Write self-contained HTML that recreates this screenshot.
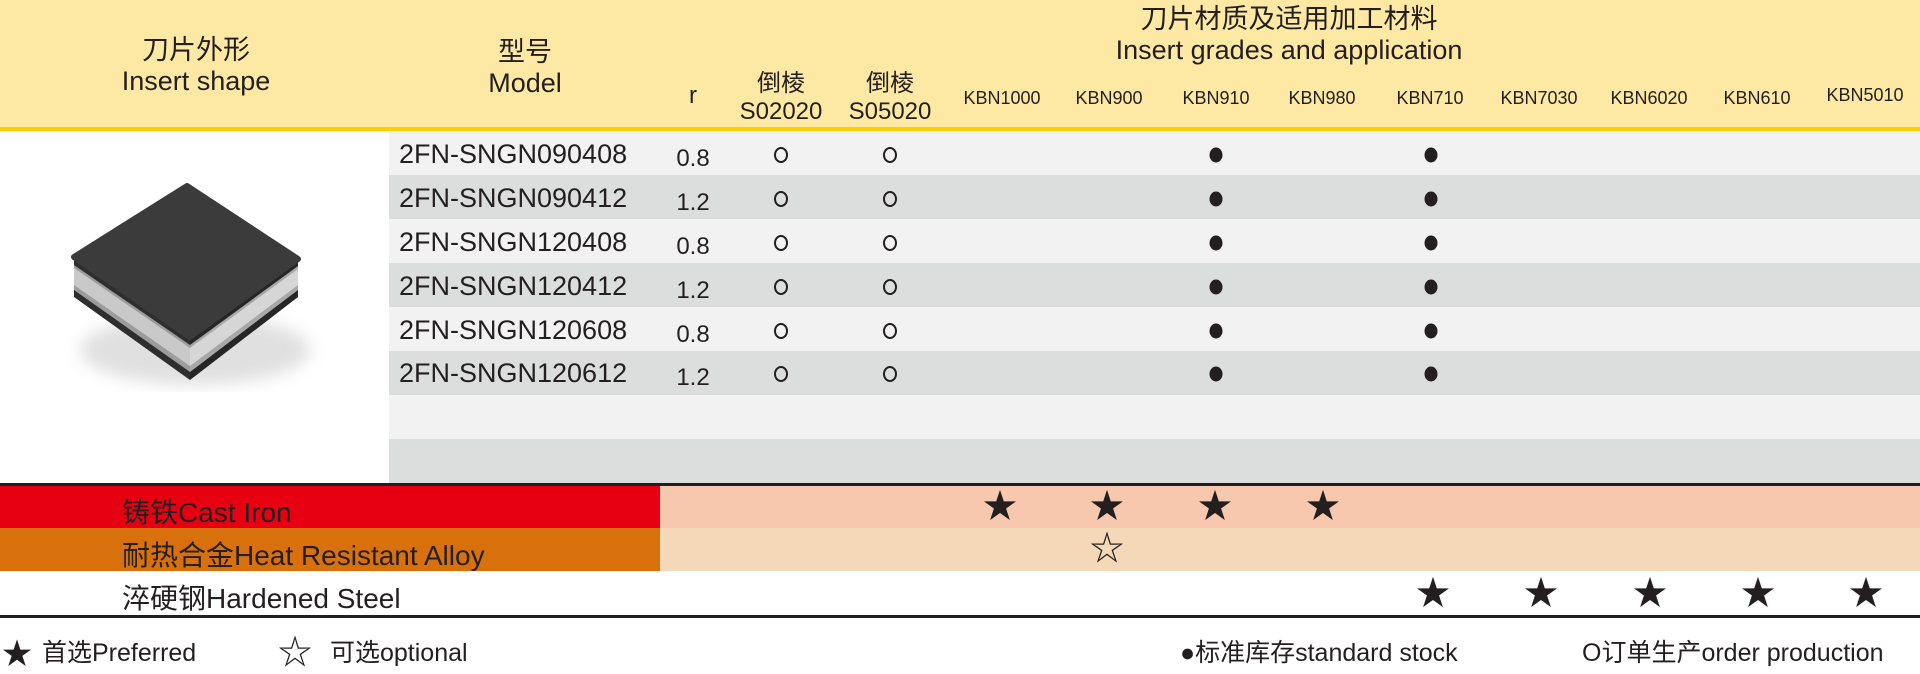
<!DOCTYPE html>
<html><head><meta charset="utf-8"><style>
body{margin:0;width:1920px;height:673px;background:#fff;position:relative;overflow:hidden;font-family:"Liberation Sans","Noto Sans CJK SC",sans-serif;color:#231f20}
.a{position:absolute;white-space:nowrap}
.c{transform:translateX(-50%);text-align:center}
.h{font-size:27px;line-height:31px}
.h2{font-size:24px;line-height:28px}
.k{font-size:18px;top:88px}
.row{position:absolute;left:389px;width:1531px;height:44px}
.m{font-size:27px;left:399px}
.r{font-size:24px}
.s{font-size:34px;line-height:34px}
.t{font-size:28px;left:122px}
.lg{font-size:25px;top:633px}
</style></head><body>
<div class="a" style="left:0;top:0;width:1920px;height:127px;background:#fee9a4"></div>
<div class="a" style="left:0;top:127px;width:1920px;height:4px;background:#fcd000"></div>
<div class="a c h" style="left:196px;top:35px">刀片外形<br>Insert shape</div>
<div class="a c h" style="left:525px;top:37px">型号<br>Model</div>
<div class="a c h2" style="left:693px;top:82px">r</div>
<div class="a c h2" style="left:781px;top:70px">倒棱<br>S02020</div>
<div class="a c h2" style="left:890px;top:70px">倒棱<br>S05020</div>
<div class="a c h" style="left:1289px;top:4px">刀片材质及适用加工材料<br>Insert grades and application</div>
<div class="a c k" style="left:1002px">KBN1000</div>
<div class="a c k" style="left:1109px">KBN900</div>
<div class="a c k" style="left:1216px">KBN910</div>
<div class="a c k" style="left:1322px">KBN980</div>
<div class="a c k" style="left:1430px">KBN710</div>
<div class="a c k" style="left:1539px">KBN7030</div>
<div class="a c k" style="left:1649px">KBN6020</div>
<div class="a c k" style="left:1757px">KBN610</div>
<div class="a c k" style="left:1865px;top:85px">KBN5010</div>

<div class="row" style="top:131px;background:#f2f2f2"></div>
<div class="row" style="top:175px;background:#dcdddd"></div>
<div class="row" style="top:219px;background:#f2f2f2"></div>
<div class="row" style="top:263px;background:#dcdddd"></div>
<div class="row" style="top:307px;background:#f2f2f2"></div>
<div class="row" style="top:351px;background:#dcdddd"></div>
<div class="row" style="top:395px;background:#f2f2f2"></div>
<div class="row" style="top:439px;background:#dcdddd"></div>

<div class="a m" style="top:139px">2FN-SNGN090408</div>
<div class="a m" style="top:183px">2FN-SNGN090412</div>
<div class="a m" style="top:227px">2FN-SNGN120408</div>
<div class="a m" style="top:271px">2FN-SNGN120412</div>
<div class="a m" style="top:315px">2FN-SNGN120608</div>
<div class="a m" style="top:358px">2FN-SNGN120612</div>
<div class="a c r" style="left:693px;top:145px">0.8</div>
<div class="a c r" style="left:693px;top:189px">1.2</div>
<div class="a c r" style="left:693px;top:233px">0.8</div>
<div class="a c r" style="left:693px;top:277px">1.2</div>
<div class="a c r" style="left:693px;top:321px">0.8</div>
<div class="a c r" style="left:693px;top:364px">1.2</div>

<svg class="a" style="left:0;top:0" width="1920" height="673">
<g fill="none" stroke="#231f20" stroke-width="2">
<ellipse cx="781" cy="155" rx="6" ry="7"/><ellipse cx="890" cy="155" rx="6" ry="7"/>
<ellipse cx="781" cy="199" rx="6" ry="7"/><ellipse cx="890" cy="199" rx="6" ry="7"/>
<ellipse cx="781" cy="243" rx="6" ry="7"/><ellipse cx="890" cy="243" rx="6" ry="7"/>
<ellipse cx="781" cy="287" rx="6" ry="7"/><ellipse cx="890" cy="287" rx="6" ry="7"/>
<ellipse cx="781" cy="331" rx="6" ry="7"/><ellipse cx="890" cy="331" rx="6" ry="7"/>
<ellipse cx="781" cy="374" rx="6" ry="7"/><ellipse cx="890" cy="374" rx="6" ry="7"/>
</g>
<g fill="#231f20">
<ellipse cx="1216" cy="155" rx="6.5" ry="7.5"/><ellipse cx="1431" cy="155" rx="6.5" ry="7.5"/>
<ellipse cx="1216" cy="199" rx="6.5" ry="7.5"/><ellipse cx="1431" cy="199" rx="6.5" ry="7.5"/>
<ellipse cx="1216" cy="243" rx="6.5" ry="7.5"/><ellipse cx="1431" cy="243" rx="6.5" ry="7.5"/>
<ellipse cx="1216" cy="287" rx="6.5" ry="7.5"/><ellipse cx="1431" cy="287" rx="6.5" ry="7.5"/>
<ellipse cx="1216" cy="331" rx="6.5" ry="7.5"/><ellipse cx="1431" cy="331" rx="6.5" ry="7.5"/>
<ellipse cx="1216" cy="374" rx="6.5" ry="7.5"/><ellipse cx="1431" cy="374" rx="6.5" ry="7.5"/>
</g>
<defs><filter id="bl"><feGaussianBlur stdDeviation="8"/></filter></defs>
<ellipse cx="195" cy="350" rx="115" ry="35" fill="#bbb" opacity=".45" filter="url(#bl)"/>
<!-- left face bands -->
<polygon points="74,257 190,337 190,380 74,297" fill="#2e2e2e"/>
<polygon points="74,265 190,345 190,372 74,290" fill="#9c9c9c"/>
<polygon points="74,268 190,348 190,366 74,285" fill="#c9c9c9"/>
<!-- right face bands -->
<polygon points="190,337 298,259 298,297 190,380" fill="#262626"/>
<polygon points="190,345 298,266 298,290 190,372" fill="#a8a8a8"/>
<polygon points="190,348 298,269 298,285 190,366" fill="#d6d6d6"/>
<polygon points="187,186 298,259 190,337 74,257" fill="#3b3b3b" stroke="#3b3b3b" stroke-width="6" stroke-linejoin="round"/>
</svg>

<div class="a" style="left:0;top:483px;width:1920px;height:3px;background:#231f20"></div>
<div class="a" style="left:0;top:486px;width:660px;height:42px;background:#e60012"></div>
<div class="a" style="left:660px;top:486px;width:1260px;height:42px;background:#f7c8ae"></div>
<div class="a" style="left:0;top:528px;width:660px;height:43px;background:#d8700c"></div>
<div class="a" style="left:660px;top:528px;width:1260px;height:43px;background:#f5d8b8"></div>
<div class="a" style="left:0;top:615px;width:1920px;height:3px;background:#231f20"></div>
<div class="a t" style="top:491px">铸铁Cast Iron</div>
<div class="a t" style="top:534px">耐热合金Heat Resistant Alloy</div>
<div class="a t" style="top:577px">淬硬钢Hardened Steel</div>

<div class="a c s" style="left:1000px;top:490px">★</div>
<div class="a c s" style="left:1107px;top:490px">★</div>
<div class="a c s" style="left:1215px;top:490px">★</div>
<div class="a c s" style="left:1323px;top:490px">★</div>
<div class="a c s" style="left:1107px;top:532px">☆</div>
<div class="a c s" style="left:1433px;top:577px">★</div>
<div class="a c s" style="left:1541px;top:577px">★</div>
<div class="a c s" style="left:1650px;top:577px">★</div>
<div class="a c s" style="left:1758px;top:577px">★</div>
<div class="a c s" style="left:1866px;top:577px">★</div>

<div class="a" style="left:2px;top:629px;font-size:30px">★</div>
<div class="a lg" style="left:42px">首选Preferred</div>
<div class="a" style="left:278px;top:625px;font-size:34px">☆</div>
<div class="a lg" style="left:330px">可选optional</div>
<div class="a lg" style="left:1180px">●标准库存standard stock</div>
<div class="a lg" style="left:1582px">O订单生产order production</div>
</body></html>
